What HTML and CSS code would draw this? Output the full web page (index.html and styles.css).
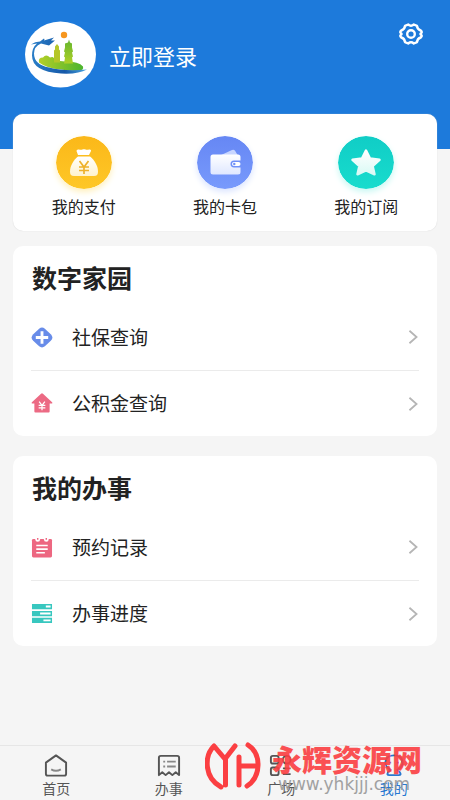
FILE: index.html
```html
<!DOCTYPE html>
<html lang="zh-CN">
<head>
<meta charset="utf-8">
<meta name="viewport" content="width=device-width, initial-scale=1">
<title>我的</title>
<link rel="stylesheet" href="styles.css">
</head>
<body>
<header class="hero">
  <a class="login" href="#">
    <svg class="avatar" viewBox="0 0 71 66" aria-hidden="true">
      <defs>
        <linearGradient id="hill" x1="0" y1="0" x2="1" y2="0"><stop offset="0" stop-color="#b4cf26"/><stop offset="1" stop-color="#4cb52f"/></linearGradient>
        <linearGradient id="tower" x1="0" y1="0" x2="0" y2="1"><stop offset="0" stop-color="#62b52f"/><stop offset="1" stop-color="#b0d026"/></linearGradient>
        <linearGradient id="wave" x1="0" y1="0" x2="1" y2="0"><stop offset="0" stop-color="#2b7fc8"/><stop offset=".6" stop-color="#1558a8"/><stop offset="1" stop-color="#4aa5df"/></linearGradient>
      </defs>
      <ellipse cx="35.500" cy="33" rx="35.500" ry="33" fill="#fff"/>
      <circle cx="39" cy="13.500" r="3.200" fill="#f6961e"/>
      <path d="M14 41q-1-5 4-5 3-4 7 0 4-2 5 3l10 1q14 0 18 5 1 4-4 4-6 1-18-1-14-1-22-7z" fill="url(#hill)"/>
      <path d="M29 41V29l1-1v-3l2-2.500 2 2.500v3l1 1v12z" fill="#b5c628"/>
      <path d="M39 42l1-6-1-1 1-4-1-1 1-4 0-4 3-1 1-3 1 3 2 1v4l1 4-1 1 1 4-1 1 1 6z" fill="url(#tower)"/>
      <path d="M6 23q4-3 9-3l4-3q1 1 0 2l10-3-3 3 4 0-6 5-8-2q-7 3-7 10 0 11 15 14 15 4 38 2-9 5-26 4Q7 50 7 34q0-8 5-12z" fill="url(#wave)"/>
    </svg>
    <span>立即登录</span>
  </a>
  <button class="settings" type="button" aria-label="设置">
    <svg viewBox="0 0 26 26" fill="none" stroke="#fff" stroke-width="2.400" stroke-linejoin="round">
      <path d="M10.200 3.500Q13 5.800 15.800 3.500L19 4.900Q19.300 8.500 22.700 9.500Q24.500 11 23.200 12Q21.600 13 23.200 14Q24.500 15 22.700 16.500Q19.300 17.500 19 21.100L15.800 22.500Q13 20.200 10.200 22.500L7 21.100Q6.700 17.500 3.300 16.500Q1.500 15 2.800 14Q4.400 13 2.800 12Q1.500 11 3.300 9.500Q6.700 8.500 7 4.900Z"/>
      <circle cx="13" cy="13" r="3.800"/>
    </svg>
  </button>
</header>
<main class="content">
  <nav class="card shortcuts" aria-label="快捷入口">
    <a class="shortcut" href="#">
      <svg class="disc disc-gold" viewBox="0 0 56 53" aria-hidden="true">
        <defs><linearGradient id="gold" x1="0" y1="0" x2="0" y2="1"><stop offset="0" stop-color="#fbb819"/><stop offset="1" stop-color="#fec727"/></linearGradient><linearGradient id="bag" x1="0" y1="0" x2="0" y2="1"><stop offset="0" stop-color="#fff"/><stop offset="1" stop-color="#fff2cc"/></linearGradient></defs>
        <ellipse cx="28" cy="26.500" rx="28" ry="26.500" fill="url(#gold)"/>
        <path d="M22 19l-1.500-4q0-2 2.500-1.500 2 .8 4-.2h2q2 1 4 .2 2.500-.5 2 1.500l-2 4z" fill="#fff"/>
        <path d="M22 20.500h12c4 3 8 9 8 15 0 3-1 4.500-4 4.500H18c-3 0-4-1.500-4-4.500 0-6 4-12 8-15z" fill="url(#bag)"/>
        <path d="M23.500 25l4.500 6 4.500-6M28 31v7M23 31h10M23 34.500h10" fill="none" stroke="#eeb12b" stroke-width="1.700"/>
      </svg>
      <span>我的支付</span>
    </a>
    <a class="shortcut" href="#">
      <svg class="disc disc-blue" viewBox="0 0 56 53" aria-hidden="true">
        <defs><linearGradient id="blue" x1="0" y1="0" x2="0" y2="1"><stop offset="0" stop-color="#6687f4"/><stop offset="1" stop-color="#789afc"/></linearGradient><linearGradient id="wallet" x1="0" y1="0" x2="0" y2="1"><stop offset="0" stop-color="#fff"/><stop offset="1" stop-color="#dfe7ff"/></linearGradient></defs>
        <ellipse cx="28" cy="26.500" rx="28" ry="26.500" fill="url(#blue)"/>
        <path d="M22 20l13-6q2-.8 3.200 1l3 5z" fill="#c8d6ff"/>
        <path d="M16 18.500h25q2.500 0 2.500 2.500v3.500H37a3.500 3.500 0 0 0 0 7h6.500V36q0 2.500-2.500 2.500H16q-2.500 0-2.500-2.500V21q0-2.500 2.500-2.500z" fill="url(#wallet)"/>
        <rect x="35" y="26" width="8.500" height="4" rx="2" fill="#fff"/><circle cx="37.300" cy="28" r="1.200" fill="#6f90f8"/>
      </svg>
      <span>我的卡包</span>
    </a>
    <a class="shortcut" href="#">
      <svg class="disc disc-teal" viewBox="0 0 56 53" aria-hidden="true">
        <defs><linearGradient id="teal" x1="0" y1="0" x2="0" y2="1"><stop offset="0" stop-color="#10cdc6"/><stop offset="1" stop-color="#18dccd"/></linearGradient><linearGradient id="star" x1="0" y1="0" x2="0" y2="1"><stop offset="0" stop-color="#fff"/><stop offset="1" stop-color="#dafaf5"/></linearGradient></defs>
        <ellipse cx="28" cy="26.500" rx="28" ry="26.500" fill="url(#teal)"/>
        <path d="M28 14.500l4 8 9.500 1.300-6.900 6.200 1.900 8.300-8.500-4-8.500 4 1.900-8.300-6.900-6.200 9.500-1.300z" fill="url(#star)" stroke="url(#star)" stroke-width="2.500" stroke-linejoin="round"/>
      </svg>
      <span>我的订阅</span>
    </a>
  </nav>
  <section class="card group">
    <h2>数字家园</h2>
    <ul>
      <li><a class="row" href="#">
        <svg class="row-icon" viewBox="0 0 22 22" aria-hidden="true"><path d="M8 1.800Q11-.6 14 1.800L20.200 7.500Q23.600 11 20.200 14.500L14 20.200Q11 22.600 8 20.200L1.800 14.500Q-1.600 11 1.800 7.500Z" fill="#688ce9"/><path d="M11 4.500v13M4.500 11h13" stroke="#fff" stroke-width="3"/></svg>
        <span>社保查询</span>
        <svg class="chevron" viewBox="0 0 12 18" aria-hidden="true"><path d="M2 2l8 7-8 7"/></svg>
      </a></li>
      <li><a class="row" href="#">
        <svg class="row-icon" viewBox="0 0 22 22" aria-hidden="true"><path d="M10 .8q1-.9 2 0l9.600 8.800q.8 1.400-.8 1.400H19v8.500q0 1-1 1H4q-1 0-1-1V11H1.200Q-.4 11 .4 9.600z" fill="#ec6a84"/><path d="M8 9l3 4 3-4M11 13v5M7.500 13h7M7.500 15.500h7" fill="none" stroke="#fff" stroke-width="1.300"/></svg>
        <span>公积金查询</span>
        <svg class="chevron" viewBox="0 0 12 18" aria-hidden="true"><path d="M2 2l8 7-8 7"/></svg>
      </a></li>
    </ul>
  </section>
  <section class="card group">
    <h2>我的办事</h2>
    <ul>
      <li><a class="row" href="#">
        <svg class="row-icon" viewBox="0 0 22 22" aria-hidden="true"><rect x=".5" y="2" width="21" height="19.500" rx="1.500" fill="#ed6781"/><circle cx="6.500" cy="2.500" r="2.500" fill="#fff"/><circle cx="15.500" cy="2.500" r="2.500" fill="#fff"/><path d="M6.500 1v2M15.500 1v2" stroke="#ed6781" stroke-width="1.500"/><path d="M5 9h12M5 12.700h12M5 16.500h9" stroke="#fff" stroke-width="1.600"/></svg>
        <span>预约记录</span>
        <svg class="chevron" viewBox="0 0 12 18" aria-hidden="true"><path d="M2 2l8 7-8 7"/></svg>
      </a></li>
      <li><a class="row" href="#">
        <svg class="row-icon" viewBox="0 0 22 22" aria-hidden="true"><path d="M.5 1h21v5.500H.5zM.5 8.300h21v5.500H.5zM.5 15.500h21V21H.5z" fill="#38c7bf"/><path d="M15 2.700h5v2h-5zM9 10h11v2H9zM12.500 17.200H20v2h-7.500z" fill="#fff"/></svg>
        <span>办事进度</span>
        <svg class="chevron" viewBox="0 0 12 18" aria-hidden="true"><path d="M2 2l8 7-8 7"/></svg>
      </a></li>
    </ul>
  </section>
</main>
<footer class="bottom">
  <nav class="tabs" aria-label="主导航">
    <a class="tab" href="#"><svg viewBox="0 0 26 26" aria-hidden="true"><path d="M2.500 10L13 2.500 23.500 10v11.500q0 2-2 2h-17q-2 0-2-2z"/><path class="soft" d="M8 17q5 3 10 0"/></svg><span>首页</span></a>
    <a class="tab" href="#"><svg viewBox="0 0 26 26" aria-hidden="true"><path d="M2.500 23V5q0-2 2-2h17q2 0 2 2v18l-3.500-3-3.500 3-3.500-3-3.500 3L6 20z"/><path class="soft" d="M7 9h2M11 9h9M7 14h2M11 14h9"/></svg><span>办事</span></a>
    <a class="tab" href="#"><svg viewBox="0 0 26 26" aria-hidden="true"><rect x="2.500" y="3" width="8" height="8" rx="2"/><circle cx="19" cy="7" r="4"/><rect x="2.500" y="15" width="8" height="8" rx="2"/><path d="M15 16h8M15 22h8"/></svg><span>广场</span></a>
    <a class="tab active" href="#" aria-current="page"><svg viewBox="0 0 26 26" aria-hidden="true"><path d="M9.500 17.500C1 13 3 2.500 13 2.500S25 13 16.500 17.500L19 20q2 3-1 3H8q-3 0-1-3z"/><path d="M9 9v2M17 9v2"/></svg><span>我的</span></a>
  </nav>
  <div class="watermark">
    <svg viewBox="0 0 56 50" aria-hidden="true"><g fill="none" stroke="#fb3f42" stroke-width="5" stroke-linecap="round" stroke-linejoin="round"><path d="M16 46C-1 37-1 15 9 5l11 13L30 5M20.500 18v26"/><path d="M34 16v28M34 25h17M43 4c14 9 13 32-1 41"/></g></svg>
    <div class="mark-copy"><strong>永辉资源网</strong><span>www.yhkjjj.com</span></div>
  </div>
</footer>
</body>
</html>
```
FILE: styles.css
```css
* { box-sizing: border-box; }

body {
  margin: 0;
  min-height: 100vh;
  display: flex;
  flex-direction: column;
  background: #f5f5f5;
  color: #222;
  font-family: "Noto Sans CJK SC", sans-serif;
}

a { color: inherit; text-decoration: none; }
svg { display: block; flex: none; }

.hero {
  display: flex;
  justify-content: space-between;
  align-items: flex-start;
  padding: 21px 25px 61px;
  background: #1d7adb;
}

.login {
  display: flex;
  align-items: center;
  gap: 13px;
  color: #fff;
  font-size: 22px;
  line-height: 32px;
}

.avatar { width: 71px; height: 67px; }

.settings {
  padding: 0;
  border: 0;
  background: none;
}

.settings svg { width: 28px; height: 26px; }

.content {
  flex: 1;
  display: flex;
  flex-direction: column;
  margin-top: -35px;
  padding: 0 13px 20px;
}

.card {
  background: #fff;
  border-radius: 10px;
}

.shortcuts {
  display: grid;
  grid-template-columns: repeat(3, 1fr);
  margin-bottom: 15px;
  padding: 22px 0 13px;
  box-shadow: 0 0 1px #ccc;
}

.shortcut {
  display: flex;
  flex-direction: column;
  align-items: center;
  gap: 5px;
  font-size: 16px;
  line-height: 24px;
}

.disc { width: 56px; height: 53px; border-radius: 50%; }
.disc-gold { box-shadow: 0 3px 6px #fff0bd; }
.disc-blue { box-shadow: 0 3px 6px #dbe5ff; }
.disc-teal { box-shadow: 0 3px 6px #c8f8f3; }

.group { padding: 12px 18px 0; }
.group + .group { margin-top: 20px; }

.group h2 {
  margin: 0;
  padding-left: 1px;
  font-size: 25px;
  line-height: 38px;
}

.group ul {
  margin: 8px 0 0;
  padding: 0;
  list-style: none;
}

.group li + li { border-top: 1px solid #ebebeb; }

.row {
  display: flex;
  align-items: center;
  height: 66px;
  font-size: 19px;
}

.group li + li .row { height: 65px; }

.row span { padding-bottom: 2px; }

.row-icon { width: 22px; height: 21px; margin-right: 19px; }

.chevron {
  width: 12px;
  height: 16px;
  margin-left: auto;
  fill: none;
  stroke: #b5b5b5;
  stroke-width: 2;
}

.bottom { position: relative; }

.tabs {
  display: grid;
  grid-template-columns: repeat(4, 1fr);
  height: 55px;
  padding-top: 7px;
  border-top: 1px solid #e6e6e6;
  color: #555;
}

.tab {
  display: flex;
  flex-direction: column;
  align-items: center;
  font-size: 14px;
  line-height: 20px;
}

.tab svg {
  width: 26px;
  height: 25px;
  fill: none;
  stroke: currentColor;
  stroke-width: 2;
  stroke-linejoin: round;
}

.tab .soft { stroke: #888; }
.tab.active { color: #2878d0; }

.watermark {
  position: absolute;
  right: 28px;
  bottom: 7px;
  display: flex;
  align-items: flex-start;
  gap: 11px;
  pointer-events: none;
}

.watermark svg { width: 56px; height: 50px; }

.mark-copy {
  display: flex;
  flex-direction: column;
}

.mark-copy strong {
  color: #fb3f42;
  font-size: 30px;
  font-weight: 900;
  line-height: 34px;
  opacity: 0.9;
}

.mark-copy span {
  padding-left: 6px;
  color: #999;
  font-family: "DejaVu Sans", sans-serif;
  font-size: 17px;
  line-height: 18px;
  opacity: 0.9;
}
```
